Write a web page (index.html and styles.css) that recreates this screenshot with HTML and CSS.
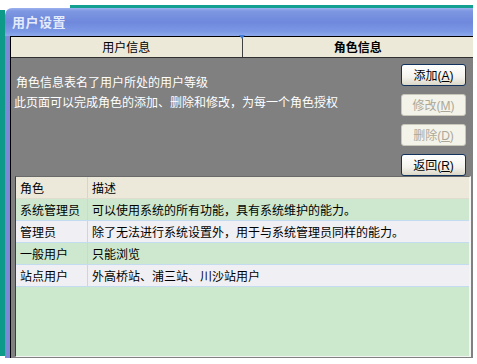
FILE: index.html
```html
<!DOCTYPE html>
<html lang="zh-CN">
<head>
<meta charset="utf-8">
<title>用户设置</title>
<link rel="stylesheet" href="styles.css">
</head>
<body>
<div class="desktop">
  <div class="window">
    <div class="titlebar">用户设置</div>
    <div class="frame">
      <div class="client">
        <div class="tabs">
          <div class="tab">用户信息</div>
          <div class="tab active">角色信息</div>
        </div>
        <div class="panel">
          <div class="top">
            <div class="desc">
              <div class="line first">角色信息表名了用户所处的用户等级</div>
              <div class="line">此页面可以完成角色的添加、删除和修改，为每一个角色授权</div>
            </div>
            <div class="buttons">
              <button class="btn">添加<span class="key">(<u>A</u>)</span></button>
              <button class="btn" disabled>修改<span class="key">(<u>M</u>)</span></button>
              <button class="btn" disabled>删除<span class="key">(<u>D</u>)</span></button>
              <button class="btn">返回<span class="key">(<u>R</u>)</span></button>
            </div>
          </div>
          <div class="grid">
            <div class="row head"><div class="c1">角色</div><div class="c2">描述</div></div>
            <div class="row g"><div class="c1">系统管理员</div><div class="c2">可以使用系统的所有功能，具有系统维护的能力。</div></div>
            <div class="row w"><div class="c1">管理员</div><div class="c2">除了无法进行系统设置外，用于与系统管理员同样的能力。</div></div>
            <div class="row g"><div class="c1">一般用户</div><div class="c2">只能浏览</div></div>
            <div class="row w"><div class="c1">站点用户</div><div class="c2">外高桥站、浦三站、川沙站用户</div></div>
            <div class="fill"></div>
          </div>
        </div>
      </div>
    </div>
  </div>
</div>
</body>
</html>
```
FILE: styles.css
```css
html, body {
  margin: 0;
  padding: 0;
  background: #ffffff;
}
body {
  font-family: "Noto Sans CJK SC", "Liberation Sans", sans-serif;
  font-size: 12px;
}
.desktop {
  width: 477px;
  height: 364px;
  box-sizing: border-box;
  padding: 8px 0 0 5px;
  background:
    linear-gradient(#0e9a89, #0e9a89) no-repeat 0 10px / 5px 346px,
    linear-gradient(#14a090, #14a090) no-repeat 70px 5px / 403px 3px,
    #ffffff;
}
.window {
  width: 468px;
  height: 350px;
  display: flex;
  flex-direction: column;
}
.titlebar {
  height: 28px;
  box-sizing: border-box;
  border-radius: 7px 0 0 0;
  background: linear-gradient(#9cb2ee 0, #7e98e2 3px, #6f88dc 50%, #7b98e4 85%, #8eaaec 100%);
  color: #e4ebfa;
  font-weight: bold;
  font-size: 13px;
  line-height: 28px;
  padding-left: 7px;
  letter-spacing: 0.5px;
}
.frame {
  flex: 1;
  display: flex;
  border-left: 5px solid #7b89d6;
}
.client {
  width: 462px;
  display: flex;
  flex-direction: column;
  border-left: 1px solid #000;
  border-top: 1px solid #000;
}
.tabs {
  height: 20px;
  display: flex;
  background: #ece9d8;
  border-bottom: 1px solid #303030;
}
.tab {
  flex: 1;
  text-align: center;
  line-height: 20px;
  color: #000;
  position: relative;
}
.tab.active {
  font-weight: bold;
  border-left: 1px solid #404040;
}
.tab.active::before {
  content: "";
  position: absolute;
  left: -4px;
  top: -2px;
  border-left: 3px solid transparent;
  border-right: 3px solid transparent;
  border-top: 4px solid #3d7ad8;
}
.panel {
  flex: 1;
  display: flex;
  flex-direction: column;
  background: #808080;
}
.top {
  height: 118px;
  display: flex;
  justify-content: space-between;
}
.desc {
  padding: 14px 0 0 3px;
  color: #ffffff;
}
.line {
  line-height: 20px;
  white-space: nowrap;
}
.line.first {
  padding-left: 2px;
}
.buttons {
  padding: 6px 7px 0 0;
  display: flex;
  flex-direction: column;
  gap: 8px;
}
.btn {
  width: 65px;
  height: 22px;
  padding: 0;
  border: 1px solid #10325c;
  border-radius: 3px;
  background: linear-gradient(#ffffff, #f4f3ee 60%, #dcd8c8);
  font-family: "Noto Sans CJK SC", "Liberation Sans", sans-serif;
  font-size: 12px;
  color: #000;
  line-height: 20px;
}
.btn:disabled {
  border-color: #c9c7ba;
  background: #f4f3ea;
  color: #aca899;
}
.key {
  font-family: "Liberation Sans", sans-serif;
  font-size: 12px;
}
.grid {
  flex: 1;
  margin: 0 2px 1px 4px;
  display: flex;
  flex-direction: column;
  border-left: 1px solid #3c3c3c;
  border-top: 1px solid #6a6a6a;
  border-right: 2px solid #f4f4f4;
  border-bottom: 1px solid #f4f4f4;
}
.row {
  height: 22px;
  display: flex;
  box-sizing: border-box;
  border-bottom: 1px solid #c3dcef;
  color: #000;
  line-height: 21px;
}
.row.head {
  background: #ece9da;
  border-bottom-color: #e0ddd0;
}
.row.g {
  background: #cde8cf;
}
.row.w {
  background: #f0f0f4;
}
.c1 {
  width: 72px;
  padding-left: 4px;
  box-sizing: border-box;
  border-right: 1px solid #d4d4d4;
}
.c2 {
  padding-left: 4px;
  white-space: nowrap;
}
.fill {
  flex: 1;
  background: #cce8cd;
}
```
